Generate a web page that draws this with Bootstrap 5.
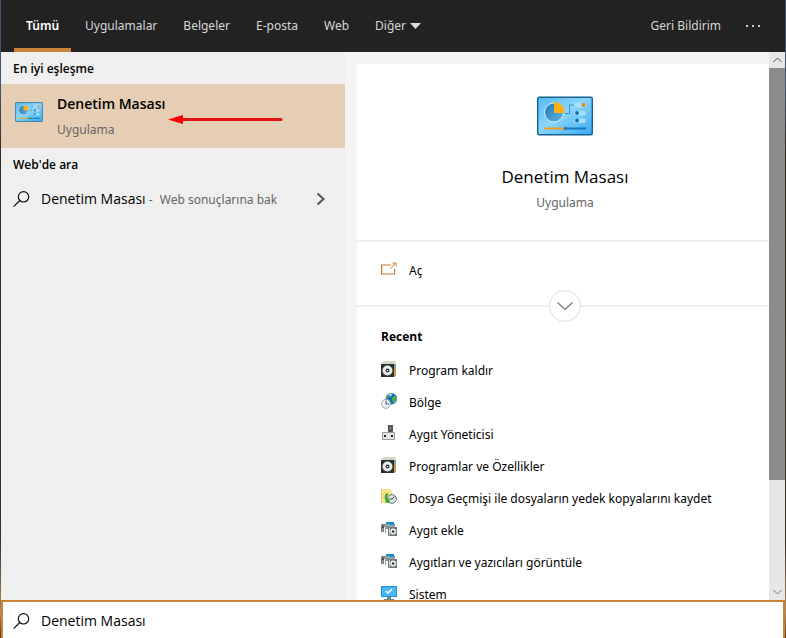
<!DOCTYPE html>
<html lang="tr">
<head>
<meta charset="utf-8">
<meta name="viewport" content="width=device-width, initial-scale=1">
<title>Denetim Masası</title>
<link href="https://cdn.jsdelivr.net/npm/bootstrap@5.3.0/dist/css/bootstrap.min.css" rel="stylesheet">
<style>
body{font-family:"Noto Sans","Open Sans",sans-serif;font-size:12px;line-height:20px;color:#000;background:linear-gradient(#44566f 0,#44566f 14%,#35291f 24%,#3d3026 85%,#b08a60 96%,#5a3a1c)}
button{font:inherit;color:inherit;background:none;border:0;padding:0;text-align:left}
.shell{height:100vh;padding:0 1px}
.topbar{height:52px;background:#222;color:#d6d6d6;padding:0 20px 0 13px}
.tabs{gap:2px}
.tab{height:52px;padding:4px 12px 0;border-bottom:4px solid transparent;white-space:nowrap}
.tab.active{color:#fff;font-weight:600;border-color:#c8853a}
.results{flex:0 0 344px;background:#efefef}
.heading{font-family:"Open Sans",sans-serif;font-size:12px;font-weight:600;line-height:20px;padding:7px 12px 5px;margin:0}
.best{background:#e5ceb3;height:64px;padding:0 12px;gap:12px}
.best-name{font-family:"Open Sans",sans-serif;font-size:14px;font-weight:600;line-height:24px}
.grey{color:#666}
.query{font-family:"Open Sans",sans-serif;font-size:14px}
.webrow{height:38px;padding:0 20px 0 12px;gap:11px}
.arrow{left:166px;top:30px}
.detail{background:#f4f4f4;padding:12px 0 0 12px}
.panel{background:#fff}
.hero{height:178px;padding:32px 0 0 4px;border-bottom:2px solid #f0f0f0}
.hero h1{font-family:"Open Sans",sans-serif;font-size:17px;font-weight:400;line-height:24px;margin:29px 0 4px}
.open-row{height:65px;padding:0 24px 6px;border-bottom:2px solid #f0f0f0}
.item{height:32px;gap:12px;padding:0 24px}
.item svg,.open-row svg{margin-top:-4px}
.expand{width:32px;height:32px;border:1px solid #ddd;border-radius:50%;background:#fff;left:50%;bottom:-17px;margin-left:-14px}
.recent h2{font-family:"Open Sans",sans-serif;font-size:12px;font-weight:700;line-height:20px;margin:20px 24px 8px}
.scroll{flex:0 0 16px;background:#e6e6e6}
.scroll button{height:16px;width:16px}
.thumb{background:#8b8b8b;flex:0 0 412px}
.searchbar{flex:0 0 38px;background:#fff;border:solid #c8853a;border-width:2px 2px 0 2px;padding:2px 10px 0;gap:11px}
.searchbar input{font-family:"Open Sans",sans-serif;border:0;outline:0;padding:0;font-size:14px;line-height:20px;color:#000;background:none}
svg{display:block;flex:none}
</style>
<script src="https://cdn.jsdelivr.net/npm/bootstrap@5.3.0/dist/js/bootstrap.bundle.min.js"></script>
</head>
<body class="overflow-hidden">
<svg width="0" height="0" class="position-absolute" aria-hidden="true">
<defs>
<linearGradient id="blue" x2="1" y2="1"><stop stop-color="#54b9f2"/><stop offset=".45" stop-color="#8bd5fb"/><stop offset="1" stop-color="#38aaf2"/></linearGradient>
<linearGradient id="pie" x2="1" y2="1"><stop stop-color="#1c79b9"/><stop offset="1" stop-color="#63b4dc"/></linearGradient>
<symbol id="cpl" viewBox="0 0 56 40">
<rect x=".7" y="1.2" width="54.6" height="37.6" rx="1.5" fill="url(#blue)" stroke="#17618f" stroke-width="1.4"/>
<circle cx="17" cy="16.500" r="9.500" fill="url(#pie)" stroke="#d4f0ff" stroke-width="1"/>
<path d="M17 17V6a10.500 10.500 0 0 1 10.500 11z" fill="#ffb013"/>
<path d="M28 17.500h4.500V9H37" fill="none" stroke="#3b93c9"/>
<rect x="37" y="7" width="12" height="4.500" rx="2.200" fill="#a9defa"/><rect x="37" y="15" width="12" height="4.500" rx="2.200" fill="#a9defa"/><rect x="37" y="22.500" width="12" height="4.500" rx="2.200" fill="#a9defa"/>
<circle cx="46.500" cy="9" r="2" fill="#e58a22"/><circle cx="40" cy="17" r="1.900" fill="#146fae"/><circle cx="40" cy="24.500" r="1.900" fill="#146fae"/>
<path d="M7 32.500h20" stroke="#ef9d24" stroke-width="2"/><path d="M30 32.500h19" stroke="#1777b9" stroke-width="2"/><circle cx="28.500" cy="32.500" r="1.700" fill="#1777b9"/>
</symbol>
<symbol id="mag" viewBox="0 0 17 17"><circle cx="10.500" cy="5.800" r="5.200" fill="none" stroke="#111" stroke-width="1.200"/><path d="M6.800 9.500.6 15.700" stroke="#111" stroke-width="1.200"/></symbol>
<symbol id="prog" viewBox="0 0 16 16"><path d="M2 0h12l1 3H1z" fill="#d6d3c5"/><path d="M12 3h3v12.500h-3z" fill="#cf9a50"/><path d="M12 3h3v5h-3z" fill="#7dad8d"/><path d="M0 3h13v13H0z" fill="#2b3032"/><circle cx="6.500" cy="9.500" r="5" fill="#e6eaeb"/><circle cx="6.500" cy="9.500" r="2" fill="#252a2c"/><circle cx="6.500" cy="9.500" r=".8" fill="#fff"/></symbol>
<symbol id="globe" viewBox="0 0 16 16"><circle cx="10.300" cy="5.700" r="5.700" fill="#1a68bd"/><path d="M5 4q2-4 5-3.500l-.5 2-2 1.500-1 2zM11 4.500l4-2q2 5-2 8l-2-3z" fill="#4fae48"/><path d="M7.500 1q3-1 4 0l-2 3z" fill="#a9d9ff"/><circle cx="5" cy="10.800" r="4.500" fill="#edf3f5" stroke="#93a5b0"/><path d="M5 7.500v3.500h3" fill="none" stroke="#485c69"/></symbol>
<symbol id="device" viewBox="0 0 16 16"><path d="M7 0h5v8H7z" fill="#565656"/><path d="M9 2h1v2H9z" fill="#aaa"/><path d="M1.500 7.500h12v7h-12z" fill="#e6e6e6" stroke="#9a9a9a"/><path d="M3 10h2v2H3zm7 0h2v2h-2z" fill="#222"/></symbol>
<symbol id="history" viewBox="0 0 16 16"><path d="M0 0h9l2 2v12H0z" fill="#f7e28a"/><path d="M0 0h1v14H0z" fill="#e7c858"/><circle cx="11" cy="10" r="4.400" fill="#dce3e3" stroke="#687778"/><path d="m11 10 2.500-2.500M8.500 10H11" fill="none" stroke="#444"/><path d="M5.500 4Q2 8 5 12l-1 1.500 5 .5-1-4.500-1.500 1Q5 8 7.500 5z" fill="#2faa36"/></symbol>
<symbol id="printer" viewBox="0 0 16 16"><path d="M0 3h5v3H3v5H0z" fill="#7d868a"/><path d="M1 5h2v2H1z" fill="#424a4d"/><path d="M4 3h10v3H4z" fill="#969ea1"/><path d="M5 1h8v3H5z" fill="#2587cf"/><path d="M5 3h4v1H5z" fill="#5cc58d"/><path d="M4 6h3v2H5v4H4z" fill="#8c9497"/><path d="M7 6h9v9H7z" fill="#757c7e"/><path d="M8 7h1v7H8z" fill="#c8cccd"/><circle cx="12.200" cy="10.500" r="2.900" fill="#eef1f2"/><circle cx="12.200" cy="10.500" r="1.300" fill="#303739"/></symbol>
<symbol id="monitor" viewBox="0 0 16 16"><path d="M0 1h16v11H0z" fill="#2491d1"/><path d="M1 2h14v9H1z" fill="#47b9f2"/><path d="m5 6 2 2 4-4" fill="none" stroke="#fff" stroke-width="1.500"/><path d="M6 12h4v2h3v1H3v-1h3z" fill="#70858e"/></symbol>
</defs>
</svg>
<div class="shell d-flex flex-column">
<header class="topbar d-flex justify-content-between flex-shrink-0">
<nav class="tabs d-flex" aria-label="Filtreler">
<button class="tab active">Tümü</button><button class="tab">Uygulamalar</button><button class="tab">Belgeler</button><button class="tab">E-posta</button><button class="tab">Web</button>
<button class="tab d-flex align-items-center gap-1">Diğer <svg width="12" height="6" viewBox="0 0 12 6"><path d="M0 0h11L5.500 6z" fill="#ddd"/></svg></button>
</nav>
<div class="d-flex align-items-center"><button class="tab">Geri Bildirim</button><button class="ps-2 ms-1" aria-label="Diğer seçenekler"><svg width="20" height="4" viewBox="0 0 20 4"><path d="M1 1h2v2H1zm6 0h2v2H7zm6 0h2v2h-2z" fill="#ccc"/></svg></button></div>
</header>
<main class="d-flex flex-grow-1 overflow-hidden">
<section class="results">
<h2 class="heading">En iyi eşleşme</h2>
<button class="best position-relative d-flex align-items-center w-100">
<svg width="32" height="22" viewBox="0 0 28 22" preserveAspectRatio="xMidYMid meet" class="mb-2"><use href="#cpl" y="1" width="28" height="20"/></svg>
<span><span class="best-name d-block">Denetim Masası</span><span class="grey d-block pt-1">Uygulama</span></span>
<svg class="arrow position-absolute" width="117" height="12" viewBox="0 0 117 12"><path d="M14 5.500h100" stroke="#de1010" stroke-width="3" stroke-linecap="round"/><path d="m1 5.500 15-4.500v9z" fill="#f00"/></svg>
</button>
<h2 class="heading">Web'de ara</h2>
<button class="webrow d-flex align-items-center w-100"><svg width="17" height="17"><use href="#mag"/></svg><span class="flex-grow-1 text-nowrap"><span class="query">Denetim Masası</span> <span class="grey"><span class="me-1">-</span> Web sonuçlarına bak</span></span><svg width="9" height="14" viewBox="0 0 9 14"><path d="m1.500 1.500 6 5.500-6 5.500" fill="none" stroke="#555" stroke-width="2"/></svg></button>
</section>
<section class="detail flex-grow-1 overflow-hidden">
<div class="panel h-100">
<div class="hero d-flex flex-column align-items-center"><svg width="56" height="40"><use href="#cpl"/></svg><h1>Denetim Masası</h1><span class="grey">Uygulama</span></div>
<div class="open-row position-relative d-flex align-items-center"><button class="d-flex align-items-center gap-2"><svg width="20" height="14" viewBox="0 0 20 14"><path d="M10 3H.600v9h13V7" fill="none" stroke="#c07a38" stroke-width="1.200"/><path d="M9.500 6.500 15 1M11.500 1H15v3.500" fill="none" stroke="#d77c27"/></svg>Aç</button>
<button class="expand position-absolute d-flex align-items-center justify-content-center" aria-label="Genişlet"><svg class="m-0" width="16" height="9" viewBox="0 0 16 9"><path d="m.5.5 7.500 7 7.500-7" fill="none" stroke="#777" stroke-width="1.200"/></svg></button></div>
<div class="recent"><h2>Recent</h2>
<button class="item d-flex align-items-center w-100"><svg width="16" height="16"><use href="#prog"/></svg>Program kaldır</button>
<button class="item d-flex align-items-center w-100"><svg width="16" height="16"><use href="#globe"/></svg>Bölge</button>
<button class="item d-flex align-items-center w-100"><svg width="16" height="16"><use href="#device"/></svg>Aygıt Yöneticisi</button>
<button class="item d-flex align-items-center w-100"><svg width="16" height="16"><use href="#prog"/></svg>Programlar ve Özellikler</button>
<button class="item d-flex align-items-center w-100 text-nowrap"><svg width="16" height="16"><use href="#history"/></svg>Dosya Geçmişi ile dosyaların yedek kopyalarını kaydet</button>
<button class="item d-flex align-items-center w-100"><svg width="16" height="16"><use href="#printer"/></svg>Aygıt ekle</button>
<button class="item d-flex align-items-center w-100"><svg width="16" height="16"><use href="#printer"/></svg>Aygıtları ve yazıcıları görüntüle</button>
<button class="item d-flex align-items-center w-100"><svg width="16" height="16"><use href="#monitor"/></svg>Sistem</button>
</div></div>
</section>
<div class="scroll d-flex flex-column"><button class="d-flex align-items-center justify-content-center" aria-label="Yukarı"><svg width="9" height="6" viewBox="0 0 9 6"><path d="m.5 5 4-4 4 4" fill="none" stroke="#555"/></svg></button><div class="thumb"></div><button class="mt-auto d-flex align-items-center justify-content-center" aria-label="Aşağı"><svg width="9" height="6" viewBox="0 0 9 6"><path d="m.5 1 4 4 4-4" fill="none" stroke="#777"/></svg></button></div>
</main>
<div class="searchbar d-flex align-items-center"><label for="q"><svg width="17" height="17"><use href="#mag"/></svg></label><input id="q" class="flex-grow-1" type="text" value="Denetim Masası" aria-label="Ara"></div>
</div>
</body>
</html>
